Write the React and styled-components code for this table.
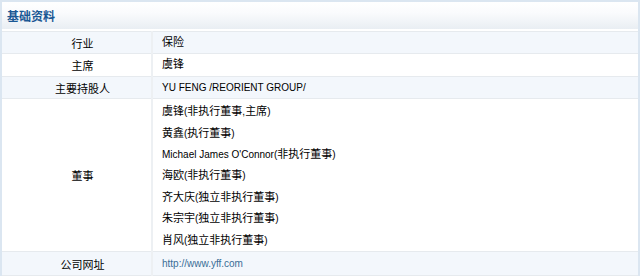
import styled, { createGlobalStyle } from "styled-components";

const GlobalStyle = createGlobalStyle`
  body {
    margin: 0;
    background: #ffffff;
    font-family: "Liberation Sans", Arial, "Noto Sans CJK SC", sans-serif;
  }
`;

const rows = [
  { label: "行业", values: ["保险"] },
  { label: "主席", values: ["虞锋"] },
  { label: "主要持股人", values: ["YU FENG /REORIENT GROUP/"] },
  {
    label: "董事",
    values: [
      "虞锋(非执行董事,主席)",
      "黄鑫(执行董事)",
      "Michael James O'Connor(非执行董事)",
      "海欧(非执行董事)",
      "齐大庆(独立非执行董事)",
      "朱宗宇(独立非执行董事)",
      "肖风(独立非执行董事)",
    ],
  },
  { label: "公司网址", values: ["http://www.yff.com"], link: true },
];

// latin runs render a bit smaller than the chinese ones
function Mixed({ text }) {
  const parts = text.match(/[\u4e00-\u9fff]+|[^\u4e00-\u9fff]+/g) || [];
  return parts.map((p, i) =>
    /[\u4e00-\u9fff]/.test(p) ? <span key={i}>{p}</span> : <Latin key={i}>{p}</Latin>
  );
}

export default function App() {
  return (
    <>
      <GlobalStyle />
      <Panel>
        <Header>
          <h2>基础资料</h2>
        </Header>
        <Table>
          <tbody>
            {rows.map((row, i) => (
              <Row key={row.label} $alt={i % 2 === 0}>
                <Label>{row.label}</Label>
                <Value $multi={row.values.length > 1}>
                  {row.values.map((v) =>
                    row.link ? (
                      <Link key={v} href="#"><Mixed text={v} /></Link>
                    ) : (
                      <Line key={v}><Mixed text={v} /></Line>
                    )
                  )}
                </Value>
              </Row>
            ))}
          </tbody>
        </Table>
      </Panel>
    </>
  );
}

const Panel = styled.div`
  width: 636px;
  border: 2px solid #dbe6f1;
  border-bottom-width: 1px;
  background: #ffffff;
`;

const Header = styled.div`
  height: 27px;
  display: flex;
  align-items: center;
  padding: 0 5px;
  background: linear-gradient(to bottom, #ffffff 0%, #fafbfd 40%, #e9eef3 100%);
  border-bottom: 2px solid #ffffff;

  h2 {
    margin: 0;
    font-size: 12px;
    font-weight: 700;
    color: #1a5894;
  }
`;

const Table = styled.table`
  width: 100%;
  border-collapse: collapse;
  font-size: 11px;
  color: #000000;
`;

const Row = styled.tr`
  background: ${(p) => (p.$alt ? "#f3f7fc" : "#ffffff")};

  td {
    border-top: 1px solid #e6eaee;
    border-bottom: 1px solid #e6eaee;
  }
`;

const Label = styled.td`
  width: 137px;
  text-align: center;
  vertical-align: middle;
  border-right: 2px solid #edf0f3;
  height: 21px;
  padding: 0 0 0 12px;
`;

const Value = styled.td`
  padding: ${(p) => (p.$multi ? "2px 9px 0" : "0 9px")};
  vertical-align: middle;
`;

const Latin = styled.span`
  font-size: 10px;
`;

const Line = styled.div`
  line-height: 21.4px;
`;

const Link = styled.a`
  display: block;
  line-height: 22px;
  color: #3a6d96;
  text-decoration: none;
`;
